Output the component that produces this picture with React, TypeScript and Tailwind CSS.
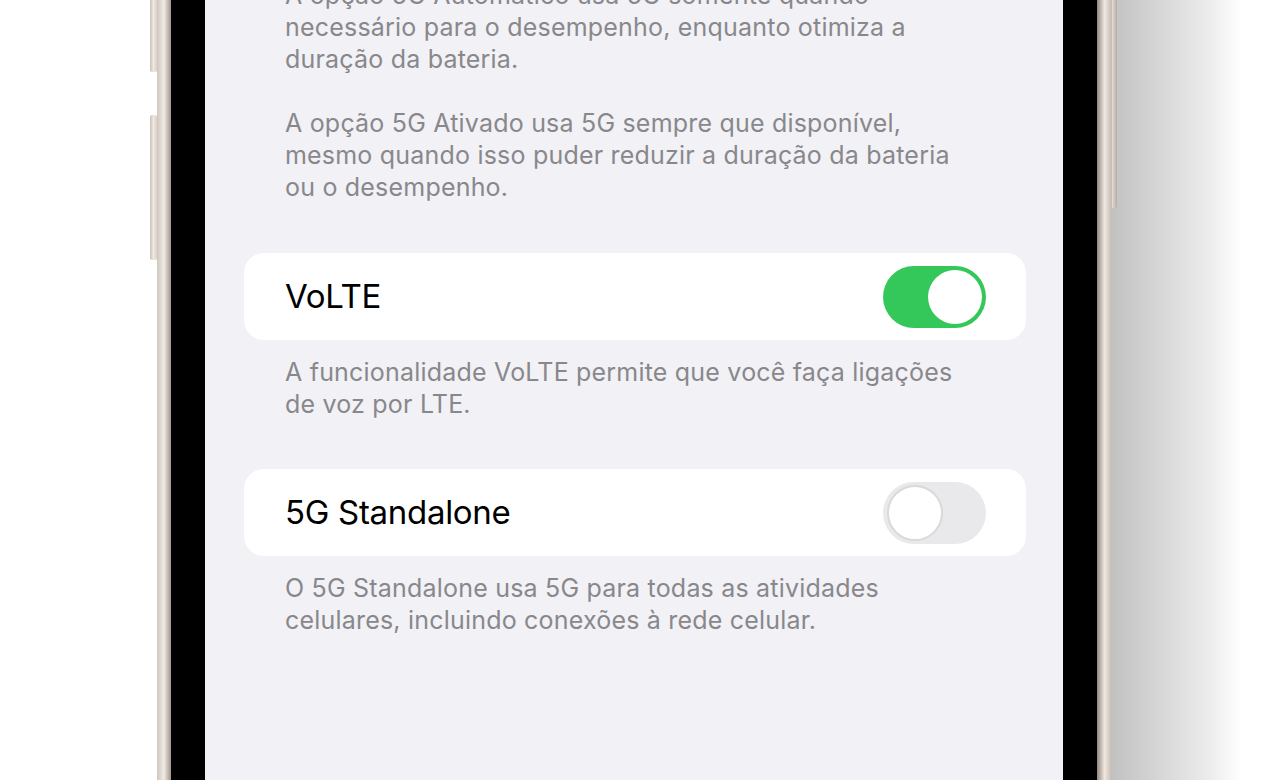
function Toggle({ on }: { on: boolean }) {
  return (
    <div
      className={
        on
          ? 'flex h-[62px] w-[103px] items-center justify-end rounded-full bg-[#34c759] px-[4px]'
          : 'flex h-[62px] w-[103px] items-center justify-start rounded-full bg-[#e9e9eb] px-[4px]'
      }
    >
      <div
        className={
          on
            ? 'h-[54px] w-[54px] rounded-full bg-white'
            : 'h-[56px] w-[56px] rounded-full border-2 border-[#d9d9db] bg-white'
        }
      />
    </div>
  );
}

function SettingRow({ label, on, note }: { label: string; on: boolean; note: string[] }) {
  return (
    <div className="flex flex-col">
      <div className="flex h-[87px] items-center justify-between rounded-[20px] bg-white pl-[41px] pr-[40px]">
        <span className="text-[33px] leading-none text-black tracking-[-0.3px]">{label}</span>
        <Toggle on={on} />
      </div>
      <div className="mt-[16px] pl-[41px] text-[25px] leading-[32px] text-[#88888c] tracking-[0.2px]">
        {note.map((line) => (
          <p key={line}>{line}</p>
        ))}
      </div>
    </div>
  );
}

export default function App() {
  return (
    <div
      className="flex h-[780px] w-[1274px] overflow-hidden bg-white"
      style={{ fontFamily: 'Inter, "Noto Sans", sans-serif' }}
    >
      <div className="w-[150px] shrink-0" />

      {/* volume buttons */}
      <div className="flex w-[7px] shrink-0 flex-col">
        <div className="h-[72px] rounded-b-[2px] bg-gradient-to-r from-[#c9c0b8] via-[#efe8e1] to-[#d8cfc7]" />
        <div className="mt-[43px] h-[145px] rounded-[2px] bg-gradient-to-r from-[#c9c0b8] via-[#efe8e1] to-[#d8cfc7]" />
      </div>

      {/* left rail */}
      <div className="w-[14px] shrink-0 bg-gradient-to-r from-[#cfc6be] via-[#f1ebe5] to-[#9e948c]" />
      <div className="w-[34px] shrink-0 bg-black" />

      {/* screen */}
      <div className="w-[858px] shrink-0 bg-[#f2f1f6]">
        <div className="mt-[-21px] pl-[80px] text-[25px] leading-[32px] text-[#88888c] tracking-[0.2px]">
          <p>A opção 5G Automático usa 5G somente quando</p>
          <p>necessário para o desempenho, enquanto otimiza a</p>
          <p>duração da bateria.</p>
          <p className="mt-[32px]">A opção 5G Ativado usa 5G sempre que disponível,</p>
          <p>mesmo quando isso puder reduzir a duração da bateria</p>
          <p>ou o desempenho.</p>
        </div>

        <div className="mt-[50px] pl-[39px] pr-[37px]">
          <SettingRow
            label="VoLTE"
            on
            note={['A funcionalidade VoLTE permite que você faça ligações', 'de voz por LTE.']}
          />
        </div>
        <div className="mt-[49px] pl-[39px] pr-[37px]">
          <SettingRow
            label="5G Standalone"
            on={false}
            note={['O 5G Standalone usa 5G para todas as atividades', 'celulares, incluindo conexões à rede celular.']}
          />
        </div>
      </div>

      {/* right rail */}
      <div className="w-[34px] shrink-0 bg-black" />
      <div className="w-[15px] shrink-0 bg-gradient-to-r from-[#8f8780] via-[#efe8e1] to-[#c3bab2]" />

      {/* shadow with side button */}
      <div className="flex flex-1 bg-gradient-to-r from-[#c2c2c2] via-[#ececec] via-60% to-white to-80%">
        <div className="h-[208px] w-[5px] rounded-br-[2px] bg-gradient-to-r from-[#e6ded6] to-[#b5aca4]" />
      </div>
    </div>
  );
}
